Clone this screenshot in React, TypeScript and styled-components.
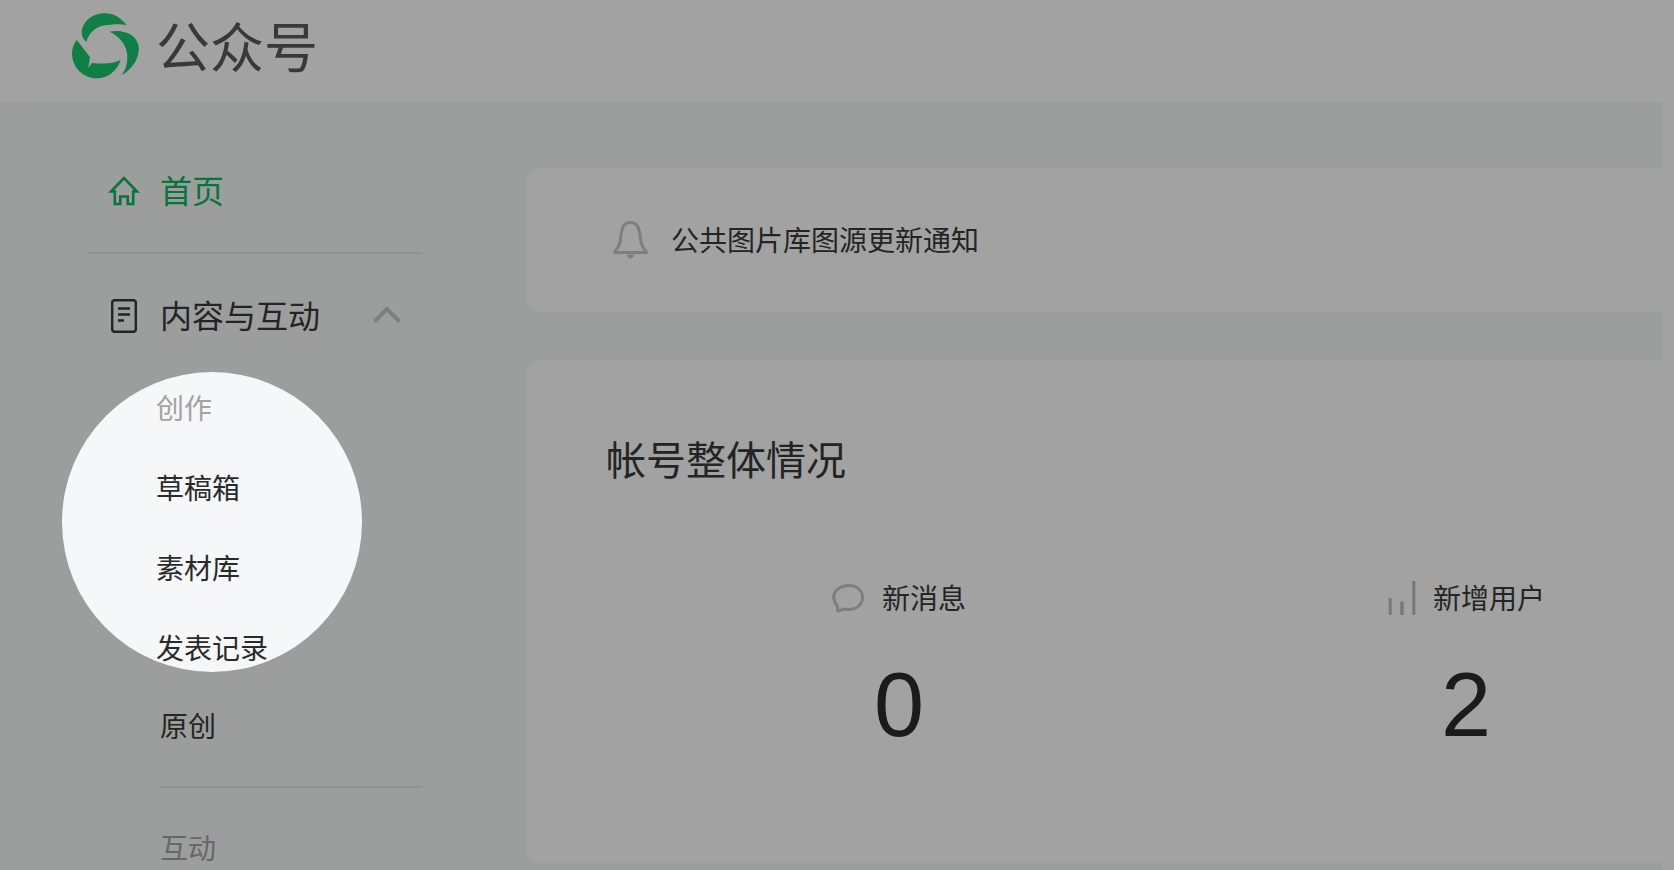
import { createGlobalStyle, styled } from "styled-components";

const GlobalStyle = createGlobalStyle`
  html, body {
    margin: 0;
    height: 100%;
    overflow: hidden;
    background: #f6f8f7;
  }
  body {
    font-family: "Noto Sans CJK SC", "Liberation Sans", sans-serif;
    color: #3a3a3a;
  }
`;

const Shell = styled.div`
  display: flex;
  height: 870px;
  overflow: hidden;
`;
const Page = styled.div`
  flex: 1;
  min-width: 0;
  display: flex;
  flex-direction: column;
`;
const ScrollTrack = styled.div`
  width: 12px;
  flex: none;
  background: #fff;
`;
const Header = styled.header`
  height: 102px;
  flex: none;
  box-sizing: border-box;
  padding: 0 0 10px 72px;
  display: flex;
  align-items: center;
  gap: 16px;
  background: #fff;
  box-shadow: 0 0 18px rgba(0, 0, 0, 0.02);
`;
const Brand = styled.div`
  font-size: 54px;
  line-height: 66px;
  padding-bottom: 2px;
  color: #5a5a5a;
`;
const Body = styled.div`
  flex: 1;
  min-height: 0;
  display: flex;
`;
const Sidebar = styled.nav`
  width: 526px;
  flex: none;
  box-sizing: border-box;
  padding: 49px 104px 0 88px;
`;
const MenuRow = styled.div<{ $active?: boolean }>`
  height: 80px;
  display: flex;
  align-items: center;
  font-size: 32px;
  color: ${(props) => (props.$active ? "#0fb561" : "#3a3a3a")};
`;
const MenuIcon = styled.span<{ $nudge?: number }>`
  width: 72px;
  flex: none;
  display: flex;
  align-items: center;
  padding-left: ${(props) => 20 + (props.$nudge ?? 0)}px;
  box-sizing: border-box;
`;
const MenuTitle = styled.span`
  flex: 1;
  padding-bottom: 4px;
`;
const Chevron = styled.svg`
  margin-right: 21px;
`;
const Divider = styled.div<{ $indent?: boolean }>`
  height: 2px;
  margin: ${(props) => (props.$indent ? "20px 0 24px 72px" : "21px 0 22px 0")};
  background: #e2e4e6;
`;
const SubGroup = styled.div`
  position: relative;
  height: 330px;
`;
const Spotlight = styled.div`
  position: absolute;
  top: 16px;
  left: -26px;
  z-index: 10;
  width: 300px;
  height: 300px;
  box-sizing: border-box;
  padding-left: 94px;
  border-radius: 50%;
  overflow: hidden;
  background: #f6f7f9;
  box-shadow: 0 0 0 3000px rgba(0, 0, 0, 0.365);
`;
const SubLabel = styled.div<{ $indent?: boolean }>`
  height: 70px;
  margin-bottom: 6px;
  display: flex;
  align-items: center;
  font-size: 28px;
  color: #a2a2a2;
  padding-left: ${(props) => (props.$indent ? "72px" : "0")};
`;
const SubItem = styled.div<{ $indent?: boolean; $dim?: boolean }>`
  height: 80px;
  box-sizing: border-box;
  padding-bottom: 2px;
  display: flex;
  align-items: center;
  font-size: 28px;
  color: ${(props) => (props.$dim ? "#3a3a3a" : "#2a2a2a")};
  padding-left: ${(props) => (props.$indent ? "72px" : "0")};
`;
const Main = styled.main`
  flex: 1;
  min-width: 0;
  overflow: hidden;
  padding-top: 66px;
  display: flex;
  flex-direction: column;
  gap: 48px;
`;
const Card = styled.section`
  width: 1300px;
  box-sizing: border-box;
  background: #fff;
  border-radius: 14px;
`;
const Notice = styled(Card)`
  height: 144px;
  flex: none;
  padding-left: 87px;
  display: flex;
  align-items: center;
  gap: 23px;
  font-size: 28px;
  color: #3a3a3a;
`;
const NoticeText = styled.span`
  padding-bottom: 2px;
`;
const Overview = styled(Card)`
  height: 503px;
  flex: none;
  padding: 70px 0 0 80px;
`;
const OverviewTitle = styled.h2`
  margin: 0;
  font-size: 40px;
  font-weight: 400;
  line-height: 56px;
  color: #3a3a3a;
`;
const Stats = styled.div`
  margin: 92px 0 0 10px;
  display: grid;
  grid-template-columns: repeat(2, 567px);
`;
const Stat = styled.div`
  display: flex;
  flex-direction: column;
  align-items: center;
`;
const StatLabel = styled.div`
  height: 40px;
  display: flex;
  align-items: center;
  gap: 17px;
  font-size: 28px;
  color: #3a3a3a;
`;
const StatText = styled.span`
  padding-bottom: 2px;
`;
const StatValue = styled.div`
  margin: 37px 1px 0 0;
  font-family: "Liberation Sans", sans-serif;
  font-size: 90px;
  line-height: 100px;
  color: #2b2b2b;
`;

function Logo() {
  return (
    <svg width="68" height="66" viewBox="0 0 68 66" fill="#16ca6d">
      <path d="M54.7 12C48 4 41 0.300 33 0.300C19 0.300 9.700 10 9.700 20C9.700 23 11 26 14.500 29C16 22 22 14 32 12.500C39 11.500 47 10.500 54.700 12Z" />
      <path d="M37.300 18.700C52 16 66.800 22 66.800 36C66.800 47 59 57 49.700 62C54 56 55.500 50 55.300 43C55 33 48 23 37.300 18.700Z" />
      <path d="M4.700 27C1.500 31.500 0 35.500 0 40.500C0 54.500 11.500 65.300 24.700 65.300C36 65.300 45 58 48.700 47C43 49.500 37.500 50.500 31 50.500C27 50.500 23.500 50.500 19.700 50L16.300 55.300L18 44Z" />
    </svg>
  );
}

function HomeIcon() {
  return (
    <svg width="32" height="30" viewBox="0 0 32 30" fill="none" stroke="#0fb561" strokeWidth="2.600">
      <path d="M16 2L3 15.500H6.800V28H12.300V20.500H19.700V28H25.200V15.500H29Z" />
    </svg>
  );
}

function DocIcon() {
  return (
    <svg width="26" height="34" viewBox="0 0 26 34" fill="none" stroke="#3a3a3a" strokeWidth="2.400">
      <rect x="1.200" y="1.200" width="23.600" height="31.600" rx="2.500" />
      <path d="M7 9.500H19M7 15.500H19M7 21.500H13" />
    </svg>
  );
}

function ChevronIcon() {
  return (
    <Chevron width="28" height="18" viewBox="0 0 28 18" fill="none" stroke="#c6c6c6" strokeWidth="4">
      <path d="M1.500 14.500L14 2L26.500 14.500" />
    </Chevron>
  );
}

function BellIcon() {
  return (
    <svg width="35" height="38" viewBox="0 0 35 38" fill="none" stroke="#c6c6c6" strokeWidth="3" strokeLinejoin="round">
      <path d="M17.500 1.500C13 1.500 10.500 4 9.500 7.500C7.500 12 8 17 7 21C6 25 4 28 1.500 31.500H33.500C31 28 29 25 28 21C27 17 27.500 12 25.500 7.500C24.500 4 22 1.500 17.500 1.500Z" />
      <path d="M14.500 34H20.500C20.500 36 19 37 17.500 37C16 37 14.500 36 14.500 34Z" fill="#c6c6c6" strokeWidth="1" />
    </svg>
  );
}

function BubbleIcon() {
  return (
    <svg width="32" height="29" viewBox="0 0 32 29" fill="none" stroke="#c6c6c6" strokeWidth="3" strokeLinejoin="round" overflow="visible">
      <g transform="translate(-1 0)">
        <path d="M17 1.500C8.500 1.500 1.700 6.500 1.700 13.500C1.700 16.800 3 19.500 5.200 21.500L5.800 27L12.500 25C14 25.300 15.500 25.500 17 25.500C25 25.500 30.500 20 30.500 13.500C30.500 6.500 25 1.500 17 1.500Z" />
      </g>
    </svg>
  );
}

function BarsIcon() {
  return (
    <svg width="28" height="34" viewBox="0 0 28 34" fill="#bdbdbd">
      <rect x="0.700" y="17" width="3" height="17" />
      <rect x="12.200" y="20.500" width="3.500" height="13.500" />
      <rect x="24.300" y="0" width="3" height="34" />
    </svg>
  );
}

function App() {
  return (
    <Shell>
      <GlobalStyle />
      <Page>
        <Header>
          <Logo />
          <Brand>公众号</Brand>
        </Header>
        <Body>
          <Sidebar>
            <MenuRow $active>
              <MenuIcon>
                <HomeIcon />
              </MenuIcon>
              <MenuTitle>首页</MenuTitle>
            </MenuRow>
            <Divider />
            <MenuRow>
              <MenuIcon $nudge={3}>
                <DocIcon />
              </MenuIcon>
              <MenuTitle>内容与互动</MenuTitle>
              <ChevronIcon />
            </MenuRow>
            <SubGroup>
              <Spotlight>
                <SubLabel>创作</SubLabel>
                <SubItem>草稿箱</SubItem>
                <SubItem>素材库</SubItem>
                <SubItem>发表记录</SubItem>
              </Spotlight>
            </SubGroup>
            <SubItem $indent $dim>
              原创
            </SubItem>
            <Divider $indent />
            <SubLabel $indent>互动</SubLabel>
          </Sidebar>
          <Main>
            <Notice>
              <BellIcon />
              <NoticeText>公共图片库图源更新通知</NoticeText>
            </Notice>
            <Overview>
              <OverviewTitle>帐号整体情况</OverviewTitle>
              <Stats>
                <Stat>
                  <StatLabel>
                    <BubbleIcon />
                    <StatText>新消息</StatText>
                  </StatLabel>
                  <StatValue>0</StatValue>
                </Stat>
                <Stat>
                  <StatLabel>
                    <BarsIcon />
                    <StatText>新增用户</StatText>
                  </StatLabel>
                  <StatValue>2</StatValue>
                </Stat>
              </Stats>
            </Overview>
          </Main>
        </Body>
      </Page>
      <ScrollTrack />
    </Shell>
  );
}

export default App;
